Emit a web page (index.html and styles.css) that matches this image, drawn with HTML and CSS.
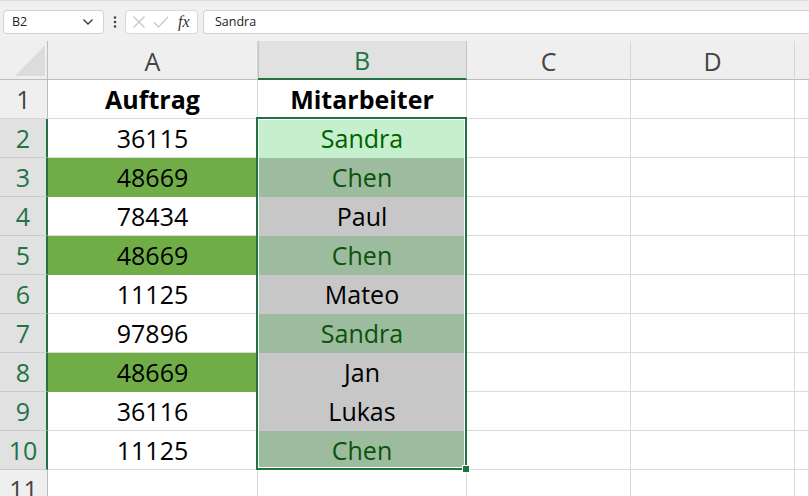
FILE: index.html
```html
<!DOCTYPE html>
<html>
<head>
<meta charset="utf-8">
<link rel="stylesheet" href="styles.css">
</head>
<body>
<div class="app">
  <div class="fbar">
    <div class="namebox">
      <span>B2</span>
      <svg class="chev" width="12" height="8" viewBox="0 0 12 8"><path d="M1.5 1.5 L6 6 L10.5 1.5" fill="none" stroke="#333" stroke-width="1.3"/></svg>
    </div>
    <div class="dots">
      <svg width="4" height="14" viewBox="0 0 4 14"><circle cx="2" cy="2.5" r="1.3" fill="#444"/><circle cx="2" cy="7" r="1.3" fill="#444"/><circle cx="2" cy="11.5" r="1.3" fill="#444"/></svg>
    </div>
    <div class="fxbox">
      <svg width="14" height="14" viewBox="0 0 14 14"><path d="M1.5 1.5 L12.5 12.5 M12.5 1.5 L1.5 12.5" stroke="#c4c4c4" stroke-width="1.1" fill="none"/></svg>
      <svg width="16" height="14" viewBox="0 0 16 14"><path d="M1 7.5 L5.5 12 L15 2" stroke="#c4c4c4" stroke-width="1.1" fill="none"/></svg>
      <span class="fx">fx</span>
    </div>
    <div class="finput">Sandra</div>
  </div>

  <div class="sheet">
    <div class="hd corner"><div class="tri"></div></div>
    <div class="hd">A</div>
    <div class="hd hsel">B</div>
    <div class="hd">C</div>
    <div class="hd">D</div>
    <div class="hd hlast"></div>

    <div class="rh">1</div>
    <div class="c b">Auftrag</div>
    <div class="c b">Mitarbeiter</div>
    <div class="c"></div><div class="c"></div><div class="c"></div>

    <div class="rh rsel">2</div>
    <div class="c">36115</div>
    <div class="c act">Sandra</div>
    <div class="c"></div><div class="c"></div><div class="c"></div>

    <div class="rh rsel">3</div>
    <div class="c fg">48669</div>
    <div class="c tg">Chen</div>
    <div class="c"></div><div class="c"></div><div class="c"></div>

    <div class="rh rsel">4</div>
    <div class="c">78434</div>
    <div class="c tw">Paul</div>
    <div class="c"></div><div class="c"></div><div class="c"></div>

    <div class="rh rsel">5</div>
    <div class="c fg">48669</div>
    <div class="c tg">Chen</div>
    <div class="c"></div><div class="c"></div><div class="c"></div>

    <div class="rh rsel">6</div>
    <div class="c">11125</div>
    <div class="c tw">Mateo</div>
    <div class="c"></div><div class="c"></div><div class="c"></div>

    <div class="rh rsel">7</div>
    <div class="c">97896</div>
    <div class="c tg">Sandra</div>
    <div class="c"></div><div class="c"></div><div class="c"></div>

    <div class="rh rsel">8</div>
    <div class="c fg">48669</div>
    <div class="c tw">Jan</div>
    <div class="c"></div><div class="c"></div><div class="c"></div>

    <div class="rh rsel">9</div>
    <div class="c">36116</div>
    <div class="c tw">Lukas</div>
    <div class="c"></div><div class="c"></div><div class="c"></div>

    <div class="rh rsel">10</div>
    <div class="c">11125</div>
    <div class="c tg">Chen</div>
    <div class="c"></div><div class="c"></div><div class="c"></div>

    <div class="rh">11</div>
    <div class="c"></div><div class="c"></div><div class="c"></div><div class="c"></div><div class="c"></div>

    <div class="selection"></div>
    <div class="handle"></div>
  </div>
</div>
</body>
</html>
```

FILE: styles.css
```css
* { box-sizing: border-box; }
html, body {
  margin: 0;
  padding: 0;
  width: 809px;
  height: 496px;
  overflow: hidden;
  background: #f0f0f0;
  font-family: "Open Sans", "Noto Sans", sans-serif;
}
.app {
  width: 809px;
  height: 496px;
  overflow: hidden;
  border-top: 1px solid #dcdcdc;
}
.fbar {
  display: flex;
  align-items: center;
  height: 40px;
  padding: 8px 0 7px 3px;
}
.namebox {
  width: 101px;
  height: 24px;
  background: #fff;
  border: 1px solid #d1d1d1;
  border-radius: 4px;
  display: flex;
  align-items: center;
  justify-content: space-between;
  padding: 0 9px 0 8px;
  font-size: 12.5px;
  color: #222;
}
.chev { margin-top: 1px; }
.dots {
  width: 21px;
  display: flex;
  justify-content: center;
  align-items: center;
}
.fxbox {
  width: 73px;
  height: 24px;
  background: #fff;
  border: 1px solid #d9d9d9;
  border-radius: 4px;
  display: flex;
  align-items: center;
  gap: 7px;
  padding: 0 0 0 6px;
}
.fx {
  font-family: "Liberation Serif", "DejaVu Serif", serif;
  font-style: italic;
  font-size: 16px;
  color: #333;
  line-height: 1;
  margin-left: 2px;
}
.finput {
  flex: 1;
  height: 24px;
  margin-left: 5px;
  background: #fff;
  border: 1px solid #d1d1d1;
  border-right: none;
  border-radius: 4px 0 0 4px;
  display: flex;
  align-items: center;
  padding-left: 11px;
  font-size: 12.5px;
  color: #222;
}

.sheet {
  position: relative;
  display: grid;
  grid-template-columns: 48px 210px 209px 164px 164px 1fr;
  grid-auto-rows: 39px;
  background: #fff;
}
.hd {
  background: #efefef;
  border-right: 1px solid #d6d6d6;
  border-bottom: 1px solid #bdbdbd;
  display: flex;
  align-items: center;
  justify-content: center;
  font-size: 25px;
  color: #444;
  padding-top: 1px;
}
.hlast { border-right: none; }
.corner { position: relative; border-right-color: #bdbdbd; }
.tri {
  position: absolute;
  left: 15px;
  top: 4px;
  width: 30px;
  height: 31px;
  background: #dcdcdc;
  clip-path: polygon(100% 0, 100% 100%, 0 100%);
}
.hsel {
  background: #e1e1e1;
  color: #217346;
  border-right-color: #c4c4c4;
  border-bottom: 2px solid #217346;
  box-shadow: inset 1px 0 0 #c4c4c4;
}
.rh {
  background: #efefef;
  border-right: 1px solid #bdbdbd;
  border-bottom: 1px solid #d6d6d6;
  display: flex;
  align-items: center;
  justify-content: center;
  font-size: 25px;
  color: #444;
  padding-bottom: 1px;
}
.rsel {
  background: #e1e1e1;
  color: #217346;
  border-right: 2px solid #217346;
  border-bottom-color: #c9c9c9;
}
.c {
  border-right: 1px solid #dadada;
  border-bottom: 1px solid #dadada;
  display: flex;
  align-items: center;
  justify-content: center;
  font-size: 25px;
  color: #000;
  padding-bottom: 1px;
  white-space: nowrap;
}
.b { font-weight: 700; }
.fg { background: #70ad47; border-color: #70ad47; }
.act { background: #c6efce; border-color: #c6efce; color: #006100; }
.tg { background: #9cbb9f; border-color: #9cbb9f; color: #0a530a; }
.tw { background: #c7c7c7; border-color: #c7c7c7; }

.selection {
  position: absolute;
  left: 256px;
  top: 76px;
  width: 211px;
  height: 353px;
  border: 2px solid #217346;
  box-shadow: inset 0 0 0 1px #fff;
  pointer-events: none;
}
.handle {
  position: absolute;
  left: 462px;
  top: 424px;
  width: 8px;
  height: 8px;
  background: #217346;
  border: 1px solid #fff;
}
```
